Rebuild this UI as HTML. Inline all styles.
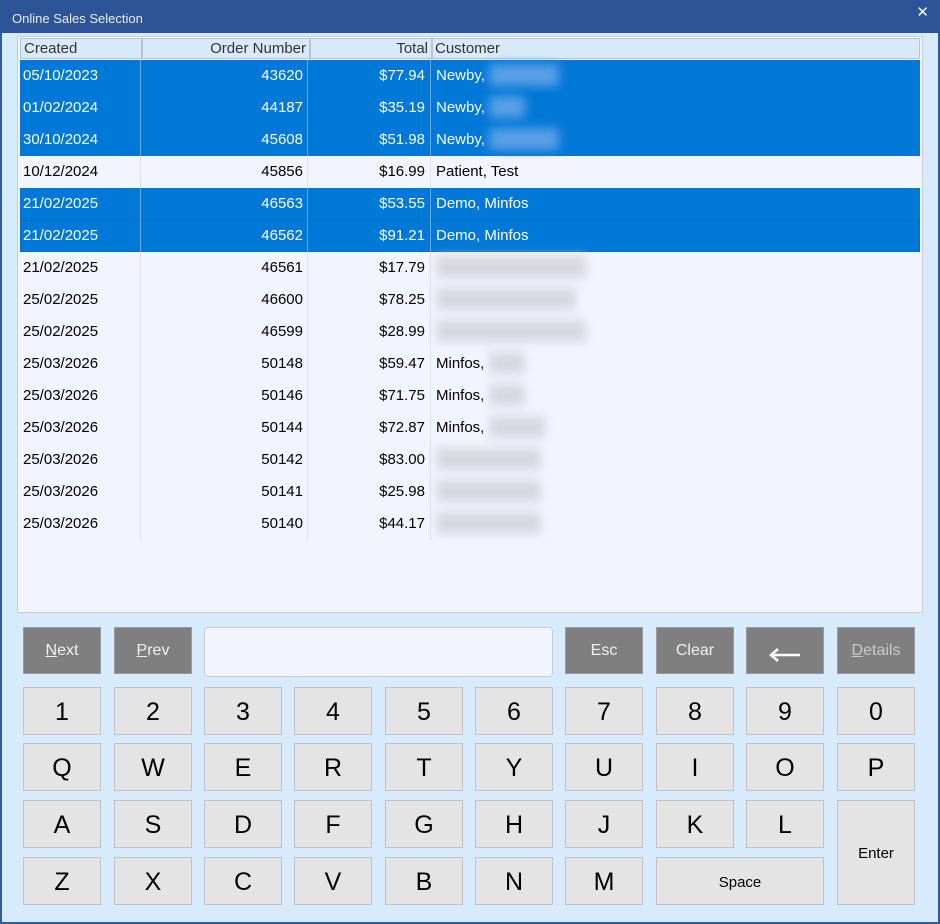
<!DOCTYPE html>
<html><head><style>
*{margin:0;padding:0;box-sizing:border-box}
body{width:940px;height:924px;background:#d7ebfc;font-family:"Liberation Sans",Arial,sans-serif;position:relative;overflow:hidden}
.win{position:absolute;left:0;top:0;width:940px;height:924px;border:2px solid #2b5ca8;border-top:none}
.title{position:absolute;left:0;top:0;width:940px;height:33px;background:#2c5497;color:#e8eef8;font-size:13px;padding:11px 0 0 12px}
.x{position:absolute;right:11px;top:3px;color:#fff;font-size:15px}
.grid{position:absolute;left:17px;top:36px;width:906px;height:577px;background:#f3f5fe;border:1px solid #c8ccd4}
.hdr{position:absolute;left:2px;top:1px;width:900px;height:21px;background:#d8eafa;border:1px solid #b8c4d0}
.hdr div{position:absolute;top:0;height:19px;font-size:15px;color:#333;line-height:19px;border-right:2px solid #b8c4d0}
.row{position:absolute;left:2px;width:900px;height:32px;font-size:15px;line-height:32px}
.row div{position:absolute;top:0;height:32px;border-right:1px solid #dde0e8}
.sel{background:#0078d7;color:#fff}
.sel div{border-right-color:#6aa6e0}
.c1{left:0;width:121px;padding-left:3px}
.c2{left:121px;width:167px;text-align:right;padding-right:4px}
.c3{left:288px;width:123px;text-align:right;padding-right:5px}
.c4{left:411px;width:489px;padding-left:5px;border-right:none!important}
.bl{display:inline-block;vertical-align:middle;height:22px;background:#d6d8e0;filter:blur(5px);margin-top:-3px}
.sel .bl{background:#5a9ee6}
.b{position:absolute;width:78px;height:48px;background:#e4e4e4;border:1px solid #c2c2c2;font-size:25px;color:#000;display:flex;align-items:center;justify-content:center;padding-top:2px}
.g{background:#7f7f7f;border-color:#9a9a9a;color:#f0f0f0;font-size:16px;height:47px;padding-top:0}
u{text-decoration:underline}
</style></head><body>
<div class="win"></div>
<div class="title">Online Sales Selection<span class="x">✕</span></div>
<div class="grid">
<div class="hdr"><div style="left:0;width:122px;padding-left:3px">Created</div><div style="left:122px;width:168px;text-align:right;padding-right:3px">Order Number</div><div style="left:290px;width:122px;text-align:right;padding-right:3px">Total</div><div style="left:412px;width:488px;padding-left:2px;border:none">Customer</div></div>
<div class="row sel" style="top:23px"><div class="c1">05/10/2023</div><div class="c2">43620</div><div class="c3">$77.94</div><div class="c4">Newby, <span class="bl" style="width:70px"></span></div></div>
<div class="row sel" style="top:55px"><div class="c1">01/02/2024</div><div class="c2">44187</div><div class="c3">$35.19</div><div class="c4">Newby, <span class="bl" style="width:36px"></span></div></div>
<div class="row sel" style="top:87px"><div class="c1">30/10/2024</div><div class="c2">45608</div><div class="c3">$51.98</div><div class="c4">Newby, <span class="bl" style="width:70px"></span></div></div>
<div class="row" style="top:119px"><div class="c1">10/12/2024</div><div class="c2">45856</div><div class="c3">$16.99</div><div class="c4">Patient, Test</div></div>
<div class="row sel" style="top:151px"><div class="c1">21/02/2025</div><div class="c2">46563</div><div class="c3">$53.55</div><div class="c4">Demo, Minfos</div></div>
<div class="row sel" style="top:183px;outline:1px dotted #6a4a20;outline-offset:-1px"><div class="c1">21/02/2025</div><div class="c2">46562</div><div class="c3">$91.21</div><div class="c4">Demo, Minfos</div></div>
<div class="row" style="top:215px"><div class="c1">21/02/2025</div><div class="c2">46561</div><div class="c3">$17.79</div><div class="c4"><span class="bl" style="width:150px"></span></div></div>
<div class="row" style="top:247px"><div class="c1">25/02/2025</div><div class="c2">46600</div><div class="c3">$78.25</div><div class="c4"><span class="bl" style="width:140px"></span></div></div>
<div class="row" style="top:279px"><div class="c1">25/02/2025</div><div class="c2">46599</div><div class="c3">$28.99</div><div class="c4"><span class="bl" style="width:150px"></span></div></div>
<div class="row" style="top:311px"><div class="c1">25/03/2026</div><div class="c2">50148</div><div class="c3">$59.47</div><div class="c4">Minfos, <span class="bl" style="width:36px"></span></div></div>
<div class="row" style="top:343px"><div class="c1">25/03/2026</div><div class="c2">50146</div><div class="c3">$71.75</div><div class="c4">Minfos, <span class="bl" style="width:36px"></span></div></div>
<div class="row" style="top:375px"><div class="c1">25/03/2026</div><div class="c2">50144</div><div class="c3">$72.87</div><div class="c4">Minfos, <span class="bl" style="width:56px"></span></div></div>
<div class="row" style="top:407px"><div class="c1">25/03/2026</div><div class="c2">50142</div><div class="c3">$83.00</div><div class="c4"><span class="bl" style="width:105px"></span></div></div>
<div class="row" style="top:439px"><div class="c1">25/03/2026</div><div class="c2">50141</div><div class="c3">$25.98</div><div class="c4"><span class="bl" style="width:105px"></span></div></div>
<div class="row" style="top:471px"><div class="c1">25/03/2026</div><div class="c2">50140</div><div class="c3">$44.17</div><div class="c4"><span class="bl" style="width:105px"></span></div></div>
</div>
<div style="position:absolute;left:204px;top:627px;width:349px;height:50px;background:#f3f5fe;border:1px solid #c8ccd4;border-radius:4px"></div>
<div class="b g" style="left:23px;top:627px"><span><u>N</u>ext</span></div>
<div class="b g" style="left:114px;top:627px"><span><u>P</u>rev</span></div>
<div class="b g" style="left:565px;top:627px">Esc</div>
<div class="b g" style="left:656px;top:627px">Clear</div>
<div class="b g" style="left:746px;top:627px"><svg width="32" height="16" viewBox="0 0 32 16" style="margin-top:8px"><path d="M2 8H31M9 2L2 8L9 14" stroke="#fff" stroke-width="2.5" fill="none"/></svg></div>
<div class="b g" style="left:837px;top:627px;color:#c8c8c8"><span><u>D</u>etails</span></div>
<div class="b" style="left:23px;top:687px">1</div><div class="b" style="left:114px;top:687px">2</div><div class="b" style="left:204px;top:687px">3</div><div class="b" style="left:294px;top:687px">4</div><div class="b" style="left:385px;top:687px">5</div><div class="b" style="left:475px;top:687px">6</div><div class="b" style="left:565px;top:687px">7</div><div class="b" style="left:656px;top:687px">8</div><div class="b" style="left:746px;top:687px">9</div><div class="b" style="left:837px;top:687px">0</div>
<div class="b" style="left:23px;top:743px">Q</div><div class="b" style="left:114px;top:743px">W</div><div class="b" style="left:204px;top:743px">E</div><div class="b" style="left:294px;top:743px">R</div><div class="b" style="left:385px;top:743px">T</div><div class="b" style="left:475px;top:743px">Y</div><div class="b" style="left:565px;top:743px">U</div><div class="b" style="left:656px;top:743px">I</div><div class="b" style="left:746px;top:743px">O</div><div class="b" style="left:837px;top:743px">P</div>
<div class="b" style="left:23px;top:800px">A</div><div class="b" style="left:114px;top:800px">S</div><div class="b" style="left:204px;top:800px">D</div><div class="b" style="left:294px;top:800px">F</div><div class="b" style="left:385px;top:800px">G</div><div class="b" style="left:475px;top:800px">H</div><div class="b" style="left:565px;top:800px">J</div><div class="b" style="left:656px;top:800px">K</div><div class="b" style="left:746px;top:800px">L</div>
<div class="b" style="left:837px;top:800px;height:105px;font-size:15px">Enter</div>
<div class="b" style="left:23px;top:857px">Z</div><div class="b" style="left:114px;top:857px">X</div><div class="b" style="left:204px;top:857px">C</div><div class="b" style="left:294px;top:857px">V</div><div class="b" style="left:385px;top:857px">B</div><div class="b" style="left:475px;top:857px">N</div><div class="b" style="left:565px;top:857px">M</div>
<div class="b" style="left:656px;top:857px;width:168px;font-size:15px">Space</div>
</body></html>
